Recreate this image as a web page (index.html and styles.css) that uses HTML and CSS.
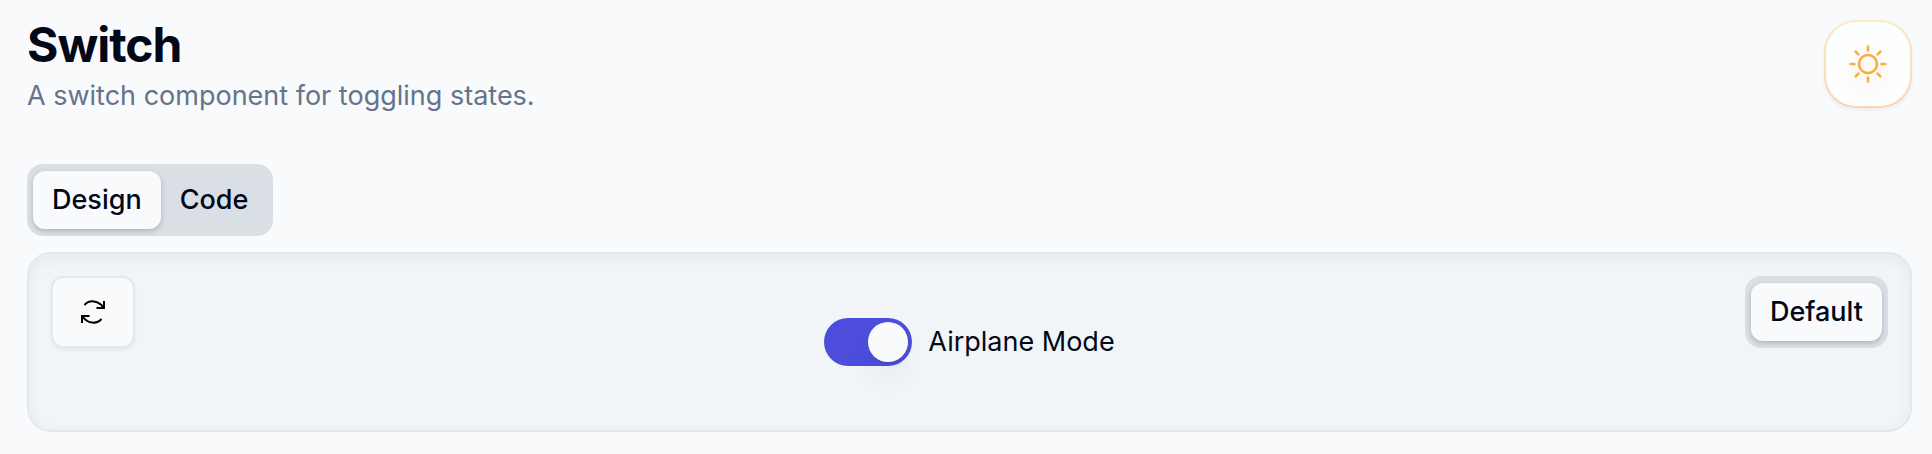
FILE: index.html
```html
<!DOCTYPE html>
<html lang="en">
<head>
    <meta charset="UTF-8">
    <title>Switch</title>
    <link rel="stylesheet" href="styles.css">
</head>
<body>
    <header class="header">
        <div>
            <h1 class="title">Switch</h1>
            <p class="description">A switch component for toggling states.</p>
        </div>
        <button class="theme-button" type="button" aria-label="Toggle theme">
            <svg class="sun" viewBox="0 0 38 38" width="38" height="38" fill="none" stroke="currentColor" stroke-width="2.6" stroke-linecap="round">
                <circle cx="19" cy="19" r="9"/>
                <path d="M19 1.500v4M19 32.500v4M1.500 19h4M32.500 19h4M6.600 6.600l2.800 2.800M28.600 28.600l2.800 2.800M6.600 31.400l2.800-2.800M28.600 9.400l2.800-2.800"/>
            </svg>
        </button>
    </header>

    <main>
        <div class="tabs" role="tablist">
            <button class="tab active" type="button" role="tab" aria-selected="true">Design</button>
            <button class="tab" type="button" role="tab" aria-selected="false">Code</button>
        </div>

        <section class="preview">
            <button class="reload-button" type="button" aria-label="Reload">
                <svg viewBox="0 0 26 26" width="26" height="26" fill="none" stroke="currentColor" stroke-width="2">
                    <path d="M4.500 6C9 .8 18 .8 23.500 8.500"/>
                    <path d="M24 2v7h-7.500"/>
                    <path d="M21.500 20C17 25.200 8 25.200 2.500 17.500"/>
                    <path d="M2 24v-7h7.500"/>
                </svg>
            </button>
            <div class="demo">
                <input class="switch" type="checkbox" role="switch" id="airplane" checked>
                <label class="switch-label" for="airplane">Airplane Mode</label>
            </div>
            <div class="tabs variants" role="tablist">
                <button class="tab active" type="button" role="tab" aria-selected="true">Default</button>
            </div>
        </section>
    </main>
</body>
</html>
```

FILE: styles.css
```css
* {
    box-sizing: border-box;
}
body {
    margin: 0;
    padding: 20px 20px 20px 27px;
    font-family: Inter, sans-serif;
    font-size: 27px;
    line-height: 40px;
    color: #020817;
    background-color: #f9fafc;
}
button {
    font: inherit;
    color: inherit;
    border: none;
    cursor: pointer;
}
.header {
    display: flex;
    justify-content: space-between;
    align-items: flex-start;
    margin-bottom: 48px;
}
.title {
    margin: 0;
    font-size: 48px;
    line-height: 50px;
    font-weight: 700;
    letter-spacing: -1px;
}
.description {
    margin: 6px 0 0;
    color: #64748b;
}
.theme-button {
    display: flex;
    align-items: center;
    justify-content: center;
    width: 88px;
    height: 88px;
    padding: 0;
    color: #f5b041;
    border: 2px solid transparent;
    border-radius: 32px;
    background: linear-gradient(#fdfefe, #fdfefe) padding-box, linear-gradient(#fdebc2, #f5d5b5) border-box;
    box-shadow: 0 2px 4px rgba(0, 0, 0, 0.06);
}
.sun {
    overflow: visible;
    filter: drop-shadow(0 8px 10px rgba(245, 150, 80, 0.25));
}
.tabs {
    display: inline-flex;
    align-items: center;
    height: 72px;
    padding: 0 6px;
    border-radius: 16px;
    background-color: #dadee5;
    vertical-align: top;
}
.tab {
    padding: 9px 19px;
    font-weight: 500;
    border-radius: 12px;
    background-color: transparent;
}
.tab.active {
    background-color: #f9fafc;
    box-shadow: 0 2px 6px rgba(0, 0, 0, 0.1), 0 2px 4px rgba(0, 0, 0, 0.1);
}
.preview {
    display: grid;
    grid-template-columns: 1fr auto 1fr;
    align-items: start;
    margin-top: 16px;
    padding: 22px;
    border: 2px solid #e2e8f0;
    border-radius: 24px;
    background-color: #f1f5f8;
    box-shadow: inset 0 4px 16px rgba(0, 0, 0, 0.05);
}
.reload-button {
    display: flex;
    align-items: center;
    justify-content: center;
    width: 84px;
    height: 72px;
    padding: 0;
    color: #000;
    border: 2px solid #e2e8f0;
    border-radius: 12px;
    background-color: #f9fafc;
    box-shadow: 0 2px 4px rgba(0, 0, 0, 0.05);
}
.demo {
    display: flex;
    align-items: center;
    gap: 16px;
    padding: 42px 0;
}
.switch {
    appearance: none;
    display: flex;
    align-items: center;
    width: 88px;
    height: 48px;
    margin: 0;
    padding: 4px;
    border-radius: 24px;
    background-color: #4d4ddb;
    cursor: pointer;
}
.switch::before {
    content: "";
    width: 40px;
    height: 40px;
    border-radius: 50%;
    background-color: #f9fafc;
    box-shadow: 0 20px 30px -6px rgba(0, 0, 0, 0.08), 0 8px 12px -8px rgba(0, 0, 0, 0.08);
}
.switch:checked {
    justify-content: flex-end;
}
.switch:not(:checked) {
    background-color: #cbd5e1;
}
.switch-label {
    line-height: 28px;
}
.variants {
    justify-self: end;
}
```
